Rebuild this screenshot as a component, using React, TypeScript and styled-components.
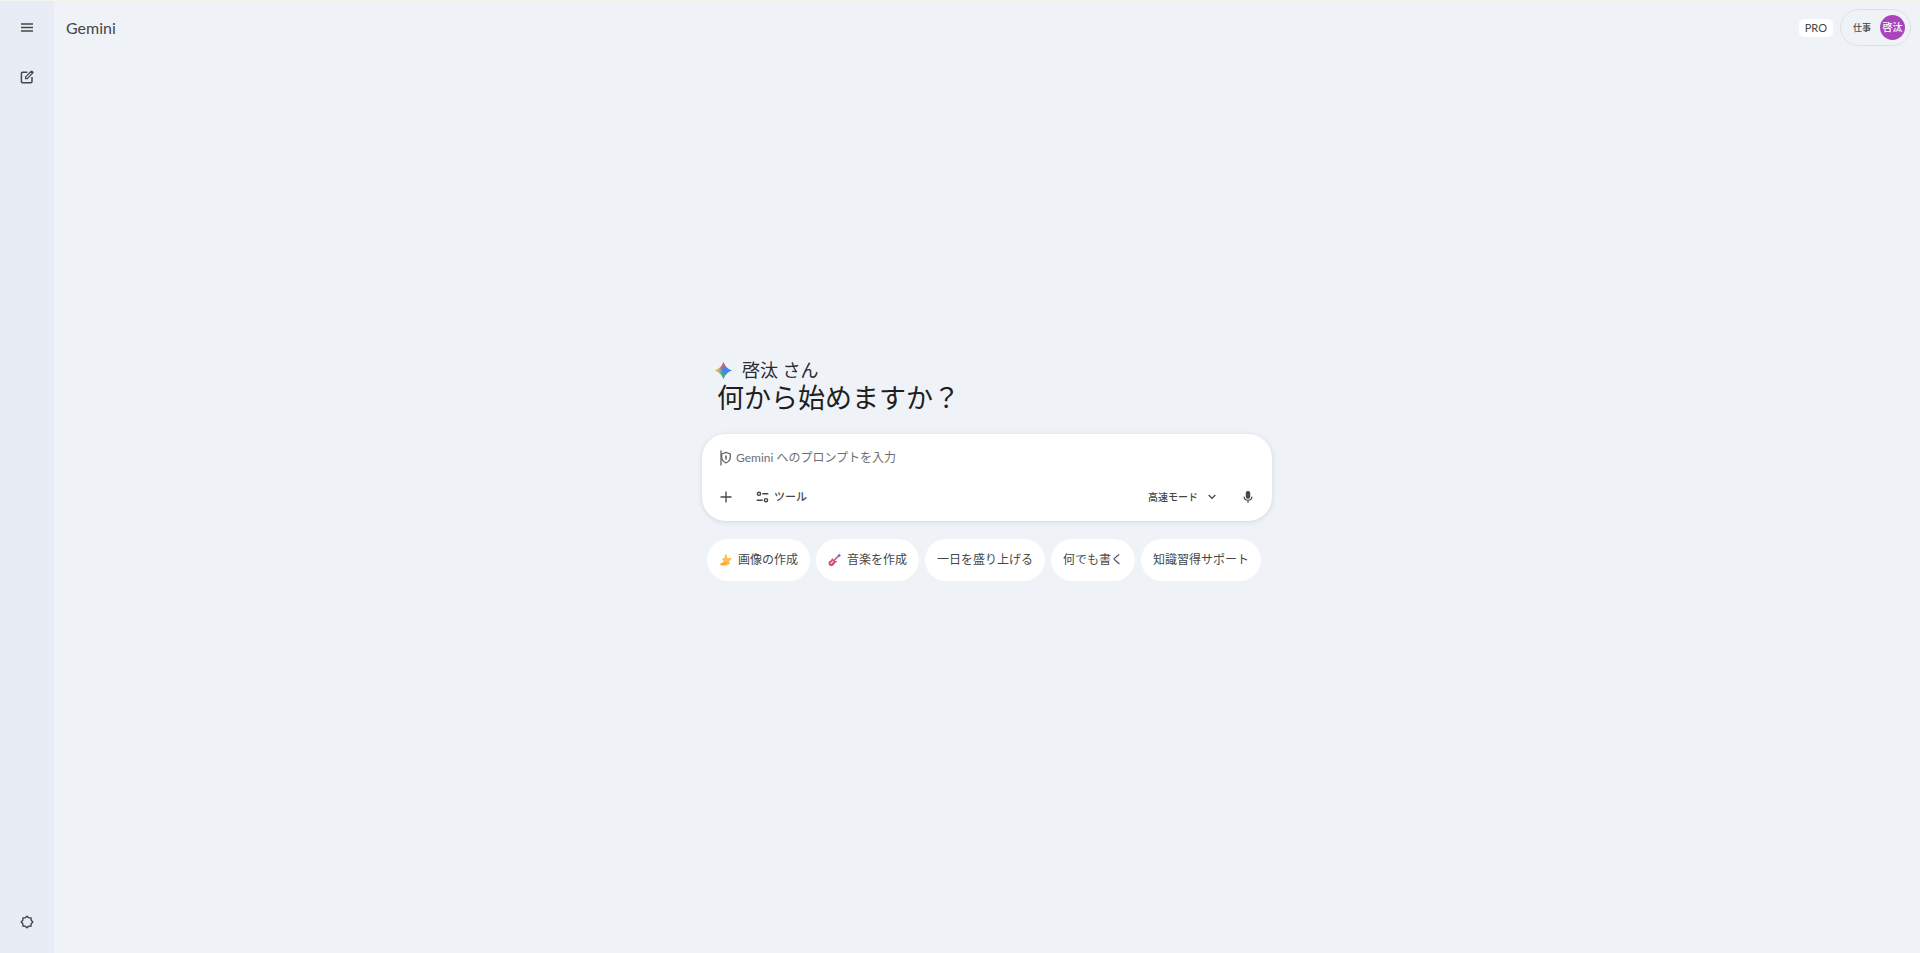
import React from "react";
import styled, { createGlobalStyle } from "styled-components";

const GlobalStyle = createGlobalStyle`
  *, *::before, *::after { box-sizing: border-box; }
  body {
    margin: 0;
    background: #eff3f8;
    color: #444746;
    font-family: Lato, "Noto Sans CJK JP", sans-serif;
  }
  button, input { font: inherit; color: inherit; }
  svg { display: block; flex: none; }
`;

const Shell = styled.div`
  display: flex;
  min-height: 100vh;
  border-top: 1px solid #f3f6ea;
`;

const Rail = styled.nav`
  display: flex;
  flex-direction: column;
  align-items: center;
  flex: none;
  width: 54px;
  padding: 10px 0 15px;
  background: #e8edf5;
  gap: 18px;
`;

const IconButton = styled.button<{ $bottom?: boolean; $size?: number }>`
  display: grid;
  place-items: center;
  width: ${(p) => p.$size ?? 32}px;
  height: ${(p) => p.$size ?? 32}px;
  margin-top: ${(p) => (p.$bottom ? "auto" : 0)};
  padding: 0;
  border: 0;
  border-radius: 50%;
  background: none;
  cursor: pointer;
`;

const Page = styled.div`
  display: flex;
  flex-direction: column;
  flex: 1;
  min-width: 0;
`;

const TopBar = styled.header`
  display: flex;
  align-items: center;
  justify-content: space-between;
  padding: 8px 9px 0 12px;
`;

const Brand = styled.a`
  color: #444746;
  font-size: 16px;
  line-height: 24px;
  text-decoration: none;
`;

const Account = styled.div`
  display: flex;
  align-items: center;
  gap: 7px;
`;

const Plan = styled.span`
  padding: 0 6px;
  border-radius: 5px;
  background: #fff;
  font-size: 11px;
  line-height: 18px;
`;

const AccountButton = styled.button`
  display: flex;
  align-items: center;
  gap: 9px;
  height: 37px;
  padding: 0 5px 0 12px;
  border: 1px solid #dde1e6;
  border-radius: 19px;
  background: none;
  font-size: 9px;
  font-weight: 500;
  cursor: pointer;
`;

const Avatar = styled.span`
  display: grid;
  place-items: center;
  width: 25px;
  height: 25px;
  border-radius: 50%;
  background: #a846b9;
  color: #fff;
  font-size: 10px;
  line-height: 25px;
`;

const Center = styled.main`
  display: flex;
  flex-direction: column;
  flex: 1;
  justify-content: center;
  width: 100%;
  max-width: 570px;
  margin: 0 auto;
  padding-bottom: 60px;
`;

const Greeting = styled.div`
  padding: 0 13px;
  color: #1f1f1f;
`;

const Hello = styled.p`
  display: flex;
  align-items: center;
  gap: 10px;
  margin: 0;
  font-size: 18px;
  line-height: 24px;
  color: #2b2c2d;
`;

const Question = styled.h1`
  margin: 0;
  padding-left: 2px;
  font-size: 27px;
  font-weight: 400;
  line-height: 32px;
`;

const Composer = styled.form`
  display: flex;
  flex-direction: column;
  justify-content: space-between;
  height: 87px;
  margin: 20px 0 18px;
  padding: 15px 12px 12px;
  border-radius: 24px;
  background: #fff;
  box-shadow: 0 1px 5px rgba(60, 70, 90, 0.16);
`;

const PromptLine = styled.label`
  display: flex;
  align-items: center;
  gap: 4px;
  padding-left: 6px;
`;

const PromptInput = styled.input`
  flex: 1;
  min-width: 0;
  height: 18px;
  padding: 0;
  border: 0;
  outline: 0;
  background: none;
  font-size: 12px;
  line-height: 18px;
  &::placeholder { color: #6b6f74; opacity: 1; }
`;

const Tools = styled.div`
  display: flex;
  align-items: center;
`;

const TextButton = styled.button<{ $push?: boolean; $gap: number }>`
  display: flex;
  align-items: center;
  gap: ${(p) => p.$gap}px;
  height: 24px;
  margin-left: ${(p) => (p.$push ? "auto" : "18px")};
  margin-right: ${(p) => (p.$push ? "20px" : 0)};
  padding: 0;
  border: 0;
  background: none;
  font-size: ${(p) => (p.$push ? 10 : 11)}px;
  font-weight: 500;
  line-height: 16px;
  cursor: pointer;
`;

const Chips = styled.div`
  display: flex;
  flex-wrap: wrap;
  gap: 6px;
  padding-left: 5px;
`;

const Chip = styled.button`
  display: flex;
  align-items: center;
  gap: 6px;
  height: 42px;
  padding: 0 12px;
  border: 0;
  border-radius: 21px;
  background: #fff;
  font-size: 12px;
  line-height: 18px;
  cursor: pointer;
`;

const MenuIcon = () => (
  <svg width="12" height="9" viewBox="0 0 12 9" stroke="#444746" strokeWidth="1.4">
    <path d="M0 1h12M0 4.5h12M0 8h12" />
  </svg>
);

const ComposeIcon = () => (
  <svg width="14" height="14" viewBox="0 0 14 14" fill="none" stroke="#444746" strokeWidth="1.5">
    <path d="M7.4 2.2H2.6Q1.4 2.2 1.4 3.4v8.2q0 1.2 1.2 1.2h8.2q1.2 0 1.2-1.2V7" />
    <path d="M5.6 8.6V6.9L11 1.5l1.6 1.6L7.3 8.6z" strokeWidth="1.3" />
    <path d="M11.2 3L12.9 1.3" strokeWidth="2.6" />
  </svg>
);

const GearIcon = () => (
  <svg width="14" height="14" viewBox="0 0 14 14" fill="none" stroke="#444746" strokeWidth="1.4">
    <path d="M7 1.2L8.7 2.7L11 2.9L11.2 5.2L12.8 7L11.2 8.8L11 11.1L8.7 11.3L7 12.8L5.3 11.3L3 11.1L2.8 8.8L1.2 7L2.8 5.2L3 2.9L5.3 2.7Z" />
  </svg>
);

const SparkIcon = () => (
  <svg width="17" height="17" viewBox="0 0 16 16">
    <defs>
      <radialGradient id="spark-red" cx="0.42" cy="0.05" r="0.42">
        <stop offset="0.4" stopColor="#f0525c" />
        <stop offset="1" stopColor="#f0525c" stopOpacity="0" />
      </radialGradient>
      <radialGradient id="spark-yellow" cx="0" cy="0.5" r="0.46">
        <stop offset="0.4" stopColor="#f5b92e" />
        <stop offset="1" stopColor="#f5b92e" stopOpacity="0" />
      </radialGradient>
      <radialGradient id="spark-green" cx="0.4" cy="0.95" r="0.45">
        <stop offset="0.4" stopColor="#35b56a" />
        <stop offset="1" stopColor="#35b56a" stopOpacity="0" />
      </radialGradient>
    </defs>
    {["#3d84f8", "url(#spark-red)", "url(#spark-green)", "url(#spark-yellow)"].map((fill) => (
      <path key={fill} fill={fill} d="M8 0C9.2 4 12 6.8 16 8C12 9.2 9.2 12 8 16C6.8 12 4 9.2 0 8C4 6.8 6.8 4 8 0Z" />
    ))}
  </svg>
);

const ShieldIcon = () => (
  <svg width="12" height="16" viewBox="0 0 12 16" fill="none" stroke="#63676b" strokeWidth="1.3">
    <path d="M1 .5v15" stroke="#333" strokeWidth="1" />
    <path d="M1.7 4L6 2.4L10.3 4V7.5Q10 11.2 6 12.8Q2.2 11.2 1.7 7.5Z" />
    <path d="M6 5.5v4" strokeWidth="1.6" />
  </svg>
);

const PlusIcon = () => (
  <svg width="12" height="12" viewBox="0 0 12 12" stroke="#444746" strokeWidth="1.3">
    <path d="M6 .5v11M.5 6h11" />
  </svg>
);

const TuneIcon = () => (
  <svg width="13" height="12" viewBox="0 0 13 12" fill="none" stroke="#444746" strokeWidth="1.4">
    <circle cx="3" cy="2.8" r="1.6" />
    <circle cx="10" cy="9.2" r="1.6" />
    <path d="M6.3 2.8h6M.7 9.2h6" />
  </svg>
);

const ChevronIcon = () => (
  <svg width="8" height="6" viewBox="0 0 8 6" fill="none" stroke="#444746" strokeWidth="1.3">
    <path d="M.7 1L4 4.4L7.3 1" />
  </svg>
);

const MicIcon = () => (
  <svg width="10" height="12" viewBox="0 0 10 12" fill="none" stroke="#444746" strokeWidth="1.1">
    <rect x="3.3" y=".6" width="3.4" height="6.6" rx="1.7" fill="#444746" />
    <path d="M1 5.6Q1.2 9.2 5 9.2Q8.8 9.2 9 5.6M5 9.2V12" />
  </svg>
);

const BananaIcon = () => (
  <svg width="13" height="14" viewBox="0 0 13 14">
    <path fill="#fcbf5a" d="M5.8 1.8Q6.8 .8 7.6 1.8L8.4 4.9L11.9 5Q13 5.8 12 6.8L10.2 8.2L10.9 10.8Q8.4 12.9 4.8 12.6Q1.2 12.6 1.2 10.6Q4 9.6 4.6 8L3.4 6.4Q3 5.2 4.2 5.2L5.6 4.8Z" />
    <path fill="#fba026" d="M1.2 10.6Q4.6 11 7.4 8.8L8.4 10.2Q5.4 12.6 2 12.2Z" />
  </svg>
);

const GuitarIcon = () => (
  <svg width="13" height="14" viewBox="0 0 13 14">
    <path stroke="#9a7bb8" strokeWidth="1.8" d="M5.2 8.2L11 2.6" />
    <path stroke="#7f74ab" strokeWidth="2.4" d="M10.2 3.2L12.2 1.6" />
    <path fill="#e0406f" d="M3.8 5.4Q4.9 4.6 4.9 6.4Q6.6 6.2 7 8Q9.8 7.6 8.8 9Q6.8 9.6 6.4 11Q5.2 13.4 2.8 12.9Q.2 12.4 .6 9.6Q1 8 2.8 7.4Q3.4 6.8 3.8 5.4Z" />
    <path stroke="#f5c6d6" strokeWidth="1.5" d="M2.6 10.8L5.4 8" />
  </svg>
);

const suggestions = [
  { label: "画像の作成", icon: <BananaIcon /> },
  { label: "音楽を作成", icon: <GuitarIcon /> },
  { label: "一日を盛り上げる" },
  { label: "何でも書く" },
  { label: "知識習得サポート" },
];

export default function App() {
  return (
    <>
      <GlobalStyle />
      <Shell>
        <Rail>
          <IconButton aria-label="メニュー"><MenuIcon /></IconButton>
          <IconButton aria-label="チャットを新規作成"><ComposeIcon /></IconButton>
          <IconButton aria-label="設定" $bottom><GearIcon /></IconButton>
        </Rail>
        <Page>
          <TopBar>
            <Brand href="#">Gemini</Brand>
            <Account>
              <Plan>PRO</Plan>
              <AccountButton>
                仕事<Avatar>啓汰</Avatar>
              </AccountButton>
            </Account>
          </TopBar>
          <Center>
            <Greeting>
              <Hello><SparkIcon />啓汰 さん</Hello>
              <Question>何から始めますか？</Question>
            </Greeting>
            <Composer onSubmit={(e) => e.preventDefault()}>
              <PromptLine>
                <ShieldIcon />
                <PromptInput aria-label="プロンプト" placeholder="Gemini へのプロンプトを入力" />
              </PromptLine>
              <Tools>
                <IconButton type="button" aria-label="ファイルを追加" $size={24}><PlusIcon /></IconButton>
                <TextButton type="button" $gap={5}><TuneIcon />ツール</TextButton>
                <TextButton type="button" $gap={10} $push>高速モード<ChevronIcon /></TextButton>
                <IconButton type="button" aria-label="マイクを使用" $size={24}><MicIcon /></IconButton>
              </Tools>
            </Composer>
            <Chips>
              {suggestions.map((s) => (
                <Chip key={s.label}>{s.icon}{s.label}</Chip>
              ))}
            </Chips>
          </Center>
        </Page>
      </Shell>
    </>
  );
}
